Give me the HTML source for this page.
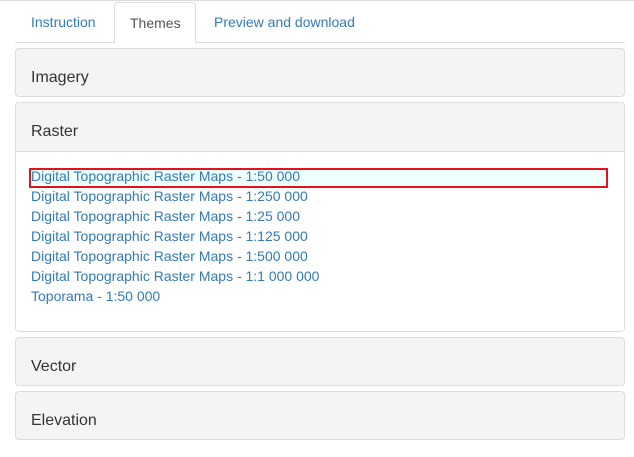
<!DOCTYPE html>
<html><head><style>
body{margin:0;width:634px;height:457px;background:#fff;font-family:"Liberation Sans",sans-serif;position:relative;overflow:hidden}
.top{position:absolute;left:0;top:0;width:634px;height:1px;background:#ddd}
.tabline{position:absolute;left:15px;top:42px;width:610px;height:1px;background:#ddd}
.tab{position:absolute;top:14px;font-size:14px;color:#337ab7}
.act{position:absolute;left:114px;top:2px;width:80px;height:40px;border:1px solid #ddd;border-bottom:1px solid #fff;border-radius:4px 4px 0 0;background:#fff;z-index:2}
.act span{position:absolute;left:15px;top:12px;font-size:14px;color:#555}
.panel{position:absolute;left:15px;width:608px;border:1px solid #ddd;border-radius:4px;background:#f4f4f4;overflow:hidden}
.panel h{position:absolute;left:15px;font-size:16px;color:#333}
.body{position:absolute;left:0;top:48px;width:608px;height:179px;background:#fff;border-top:1px solid #ddd}
.l{position:absolute;left:15px;font-size:14px;color:#337ab7;white-space:nowrap}
.sel{position:absolute;left:13px;top:16px;width:575px;height:16px;border:2px solid #e3121b;background:#f0ffff}
</style></head><body>
<div class="top"></div>
<div class="tabline"></div>
<div class="tab" style="left:31px">Instruction</div>
<div class="act"><span>Themes</span></div>
<div class="tab" style="left:214px">Preview and download</div>
<div class="panel" style="top:48px;height:47px"><h style="top:20px">Imagery</h></div>
<div class="panel" style="top:102px;height:228px"><h style="top:20px">Raster</h>
<div class="body">
<div class="sel"></div>
<div class="l" style="top:16px">Digital Topographic Raster Maps - 1:50 000</div>
<div class="l" style="top:36px">Digital Topographic Raster Maps - 1:250 000</div>
<div class="l" style="top:56px">Digital Topographic Raster Maps - 1:25 000</div>
<div class="l" style="top:76px">Digital Topographic Raster Maps - 1:125 000</div>
<div class="l" style="top:96px">Digital Topographic Raster Maps - 1:500 000</div>
<div class="l" style="top:116px">Digital Topographic Raster Maps - 1:1 000 000</div>
<div class="l" style="top:136px">Toporama - 1:50 000</div>
</div></div>
<div class="panel" style="top:337px;height:47px"><h style="top:20px">Vector</h></div>
<div class="panel" style="top:391px;height:47px"><h style="top:20px">Elevation</h></div>
</body></html>
